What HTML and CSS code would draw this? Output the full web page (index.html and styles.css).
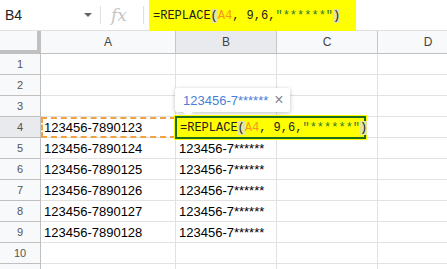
FILE: index.html
```html
<!DOCTYPE html>
<html lang="en">
<head>
    <meta charset="UTF-8">
    <title>REPLACE</title>
    <link rel="stylesheet" href="styles.css">
</head>
<body>
    <div class="formula-bar">
        <div class="name-box">B4<span class="caret"></span></div>
        <div class="sep"></div>
        <div class="fx">fx</div>
        <div class="sep"></div>
        <div class="formula"><span class="mark">=REPLACE<span class="paren">(</span><span class="ref">A4</span>, 9,6,<span class="str">"******"</span><span class="paren">)</span></span></div>
    </div>

    <div class="sheet">
        <div class="corner"></div>
        <div class="col-head">A</div>
        <div class="col-head active">B</div>
        <div class="col-head">C</div>
        <div class="col-head">D</div>

        <div class="row-head">1</div><div class="cell"></div><div class="cell"></div><div class="cell"></div><div class="cell"></div>
        <div class="row-head">2</div><div class="cell"></div><div class="cell"></div><div class="cell"></div><div class="cell"></div>
        <div class="row-head">3</div><div class="cell"></div><div class="cell"></div><div class="cell"></div><div class="cell"></div>
        <div class="row-head active">4</div><div class="cell">123456-7890123</div><div class="cell"></div><div class="cell"></div><div class="cell"></div>
        <div class="row-head">5</div><div class="cell">123456-7890124</div><div class="cell">123456-7******</div><div class="cell"></div><div class="cell"></div>
        <div class="row-head">6</div><div class="cell">123456-7890125</div><div class="cell">123456-7******</div><div class="cell"></div><div class="cell"></div>
        <div class="row-head">7</div><div class="cell">123456-7890126</div><div class="cell">123456-7******</div><div class="cell"></div><div class="cell"></div>
        <div class="row-head">8</div><div class="cell">123456-7890127</div><div class="cell">123456-7******</div><div class="cell"></div><div class="cell"></div>
        <div class="row-head">9</div><div class="cell">123456-7890128</div><div class="cell">123456-7******</div><div class="cell"></div><div class="cell"></div>
        <div class="row-head">10</div><div class="cell"></div><div class="cell"></div><div class="cell"></div><div class="cell"></div>
        <div class="row-head"></div><div class="cell"></div><div class="cell"></div><div class="cell"></div><div class="cell"></div>

        <!-- copy range around A4 -->
        <div class="copy-range"></div>

        <!-- preview tooltip -->
        <div class="preview">123456-7******<span class="close">&times;</span></div>

        <!-- in-cell editor on B4 -->
        <div class="editor">=REPLACE<span class="paren">(</span><span class="ref">A4</span>, 9,6,<span class="str">"******"</span><span class="paren">)</span></div>
    </div>
</body>
</html>
```

FILE: styles.css
```css
body {
    margin: 0;
    height: 269px;
    background: #fff;
    font-family: "Liberation Sans", Arial, sans-serif;
    overflow: hidden;
}
.formula-bar {
    display: flex;
    align-items: center;
    height: 31px;
    border-bottom: 1px solid #e0e0e0;
    box-sizing: border-box;
}
.name-box {
    position: relative;
    width: 100px;
    padding-left: 5px;
    box-sizing: border-box;
    font-size: 14px;
    color: #222;
}
.caret {
    position: absolute;
    left: 84px;
    top: 6px;
    border-left: 4px solid transparent;
    border-right: 4px solid transparent;
    border-top: 4px solid #666;
}
.sep {
    width: 1px;
    height: 18px;
    background: #e0e0e0;
}
.fx {
    width: 42px;
    padding-left: 10px;
    box-sizing: border-box;
    font-family: "DejaVu Serif", "Liberation Serif", serif;
    font-style: italic;
    font-size: 17px;
    color: #c4c4c4;
}
.formula {
    align-self: stretch;
    display: flex;
    margin: 0 0 -1px 5px;
}
.mark {
    display: flex;
    align-items: center;
    background: #ffff00;
    padding: 0 16px 0 4px;
    font-family: "Liberation Mono", monospace;
    font-size: 12px;
    color: #222;
}
.ref {
    color: #f7981d;
}
.str {
    color: #2b7a2b;
}
.paren {
    background: #e4e49a;
}
.sheet {
    position: relative;
    display: grid;
    grid-template-columns: 41px 135px 101px 101px 101px;
    grid-template-rows: 23px repeat(11, 21px);
}
.corner {
    background: #f8f9fa;
    border-right: 4px solid #c0c0c0;
    border-bottom: 4px solid #c0c0c0;
    box-sizing: border-box;
}
.col-head {
    display: flex;
    align-items: center;
    justify-content: center;
    background: #f8f9fa;
    border-right: 1px solid #c6c6c6;
    border-bottom: 1px solid #c0c0c0;
    font-size: 12px;
    color: #444;
    box-sizing: border-box;
}
.col-head.active,
.row-head.active {
    background: #e8eaed;
}
.row-head {
    display: flex;
    align-items: center;
    justify-content: center;
    background: #f8f9fa;
    border-right: 1px solid #c0c0c0;
    border-bottom: 1px solid #c0c0c0;
    font-size: 11px;
    color: #555;
    box-sizing: border-box;
}
.cell {
    display: flex;
    align-items: center;
    padding-left: 3px;
    border-right: 1px solid #e2e2e2;
    border-bottom: 1px solid #e2e2e2;
    box-sizing: border-box;
    font-size: 13px;
    color: #000;
    white-space: nowrap;
}
.copy-range {
    position: absolute;
    left: 41px;
    top: 86px;
    width: 135px;
    height: 21px;
    border: 2px dashed #f4a142;
    box-sizing: border-box;
}
.preview {
    position: absolute;
    left: 175px;
    top: 57px;
    height: 24px;
    padding: 0 6px 0 8px;
    display: flex;
    align-items: center;
    background: #fff;
    border-radius: 2px;
    box-shadow: 0 1px 4px rgba(0, 0, 0, 0.25);
    font-size: 13px;
    color: #4a7fd8;
}
.preview::after {
    content: "";
    position: absolute;
    left: 8px;
    bottom: -5px;
    border-left: 5px solid transparent;
    border-right: 5px solid transparent;
    border-top: 5px solid #fff;
}
.close {
    margin-left: 6px;
    font-size: 16px;
    color: #888;
}
.editor {
    position: absolute;
    left: 175px;
    top: 85px;
    width: 191px;
    height: 23px;
    display: flex;
    align-items: center;
    padding-left: 3px;
    background: #ffff00;
    border: 2px solid #1f6b1f;
    box-shadow: 0 0 0 1px #ffff00;
    box-sizing: border-box;
    font-family: "Liberation Mono", monospace;
    font-size: 12px;
    color: #222;
    white-space: nowrap;
}
```
